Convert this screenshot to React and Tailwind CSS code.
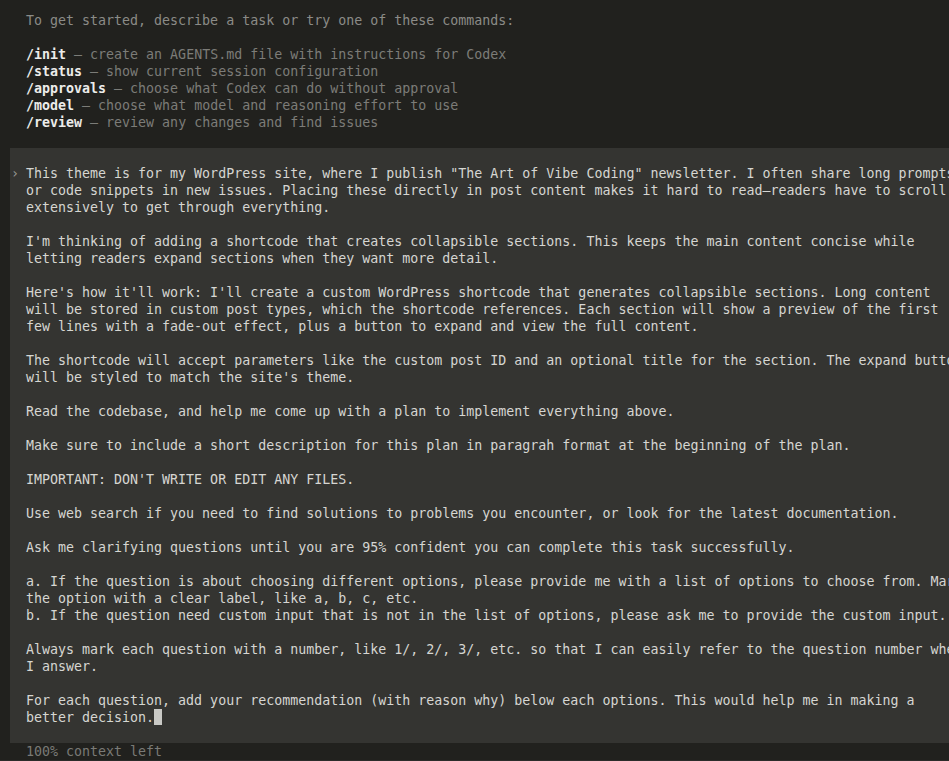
import React from "react";

const commands = [
  ["/init", "create an AGENTS.md file with instructions for Codex"],
  ["/status", "show current session configuration"],
  ["/approvals", "choose what Codex can do without approval"],
  ["/model", "choose what model and reasoning effort to use"],
  ["/review", "review any changes and find issues"],
];

const lines = [
  'This theme is for my WordPress site, where I publish "The Art of Vibe Coding" newsletter. I often share long prompts',
  "or code snippets in new issues. Placing these directly in post content makes it hard to read\u2014readers have to scroll",
  "extensively to get through everything.",
  "",
  "I'm thinking of adding a shortcode that creates collapsible sections. This keeps the main content concise while",
  "letting readers expand sections when they want more detail.",
  "",
  "Here's how it'll work: I'll create a custom WordPress shortcode that generates collapsible sections. Long content",
  "will be stored in custom post types, which the shortcode references. Each section will show a preview of the first",
  "few lines with a fade-out effect, plus a button to expand and view the full content.",
  "",
  "The shortcode will accept parameters like the custom post ID and an optional title for the section. The expand button",
  "will be styled to match the site's theme.",
  "",
  "Read the codebase, and help me come up with a plan to implement everything above.",
  "",
  "Make sure to include a short description for this plan in paragrah format at the beginning of the plan.",
  "",
  "IMPORTANT: DON'T WRITE OR EDIT ANY FILES.",
  "",
  "Use web search if you need to find solutions to problems you encounter, or look for the latest documentation.",
  "",
  "Ask me clarifying questions until you are 95% confident you can complete this task successfully.",
  "",
  "a. If the question is about choosing different options, please provide me with a list of options to choose from. Mark",
  "the option with a clear label, like a, b, c, etc.",
  "b. If the question need custom input that is not in the list of options, please ask me to provide the custom input.",
  "",
  "Always mark each question with a number, like 1/, 2/, 3/, etc. so that I can easily refer to the question number when",
  "I answer.",
  "",
  "For each question, add your recommendation (with reason why) below each options. This would help me in making a",
];

export default function App() {
  return (
    <div
      className="w-[949px] h-[761px] overflow-hidden bg-[#21211e] flex flex-col text-[13.3px] leading-[17px] whitespace-pre"
      style={{ fontFamily: '"DejaVu Sans Mono", "Liberation Mono", monospace' }}
    >
      <div className="pt-[11.5px] pl-[26px] flex flex-col">
        <div className="text-[#8b8b87]">To get started, describe a task or try one of these commands:</div>
        <div className="h-[17px]" />
        {commands.map(([c, d]) => (
          <div key={c} className="text-[#7c7c78]">
            <span className="text-[#ececea] font-bold">{c}</span> — {d}
          </div>
        ))}
        <div className="h-[17px]" />
      </div>
      <div className="ml-[10px] bg-[#343431] py-[17px] flex">
        <div className="w-[16px] shrink-0 text-[#9a9a96] pl-[1px]">›</div>
        <div className="flex flex-col text-[#d6d6d2]">
          {lines.map((l, i) => (
            <div key={i} className="h-[17px]">{l}</div>
          ))}
          <div className="h-[17px] flex items-center">
            <span>better decision.</span>
            <span className="inline-block w-[8px] h-[16px] bg-[#c9c9c5]" />
          </div>
        </div>
      </div>
      <div className="pl-[26px] text-[#7a7a76]">100% context left</div>
      <div className="flex-1" />
      <div className="h-[3px] bg-[#2c2c2a]" />
    </div>
  );
}
